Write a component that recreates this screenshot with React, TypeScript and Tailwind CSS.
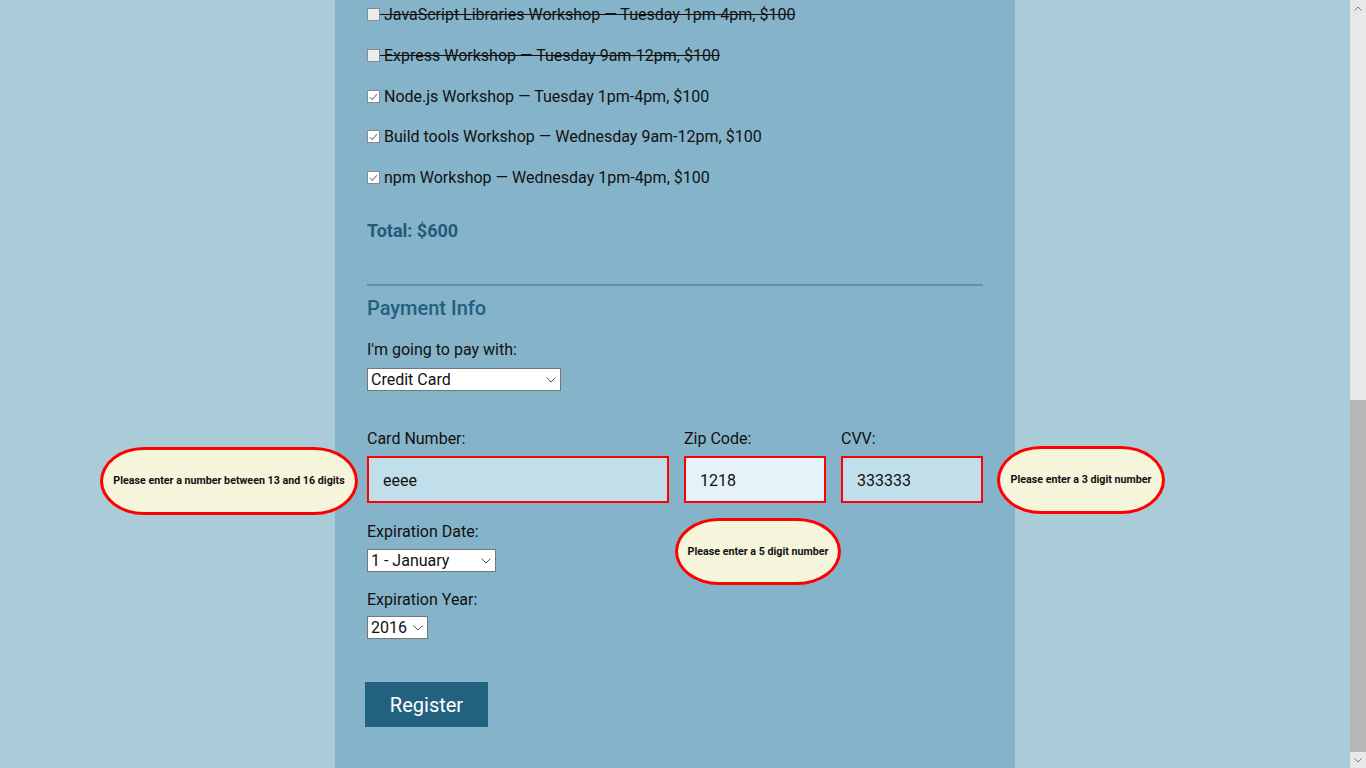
import React from 'react';

const font = { fontFamily: 'Roboto, "Liberation Sans", sans-serif' };

const workshops = [
  { text: 'JavaScript Libraries Workshop — Tuesday 1pm-4pm, $100', checked: false, disabled: true },
  { text: 'Express Workshop — Tuesday 9am-12pm, $100', checked: false, disabled: true },
  { text: 'Node.js Workshop — Tuesday 1pm-4pm, $100', checked: true, disabled: false },
  { text: 'Build tools Workshop — Wednesday 9am-12pm, $100', checked: true, disabled: false },
  { text: 'npm Workshop — Wednesday 1pm-4pm, $100', checked: true, disabled: false },
];

function Box({ checked, disabled }: { checked: boolean; disabled: boolean }) {
  return (
    <span
      className={`relative inline-block w-[13px] h-[13px] border border-[#8a8a8a] align-[-1px] ${
        disabled ? 'bg-[#ececec]' : 'bg-white'
      }`}
    >
      {checked && (
        <svg className="absolute left-[1px] top-[2px]" width="9" height="8" viewBox="0 0 9 8" fill="none">
          <path d="M1 4.2 L3.4 6.4 L8 1.2" stroke="#7b8fa8" strokeWidth="1.1" />
        </svg>
      )}
    </span>
  );
}

function Chevron() {
  return (
    <svg width="10" height="6" viewBox="0 0 10 6" fill="none">
      <path d="M0.5 0.5 L5 5 L9.5 0.5" stroke="#555" strokeWidth="1" />
    </svg>
  );
}

function FakeSelect({ value, width }: { value: string; width: string }) {
  return (
    <div
      className={`${width} h-[23px] flex items-center justify-between bg-white border border-[#767676] pl-[3px] pr-[4px] text-[16px] text-[#111] leading-none`}
    >
      <span>{value}</span>
      <Chevron />
    </div>
  );
}

function Tip({ text, className }: { text: string; className: string }) {
  return (
    <div
      className={`absolute flex items-center justify-center pt-[1px] border-[3px] border-[#ff0000] bg-[#f5f5dc] rounded-[44px/50%] text-[10.7px] font-bold text-[#111] whitespace-nowrap ${className}`}
    >
      {text}
    </div>
  );
}

export default function App() {
  return (
    <div style={font} className="w-[1366px] h-[768px] overflow-hidden flex bg-[#aacbd8]">
      <div className="flex-1 flex justify-center">
        <div className="w-[680px] h-full bg-[#85b3c9] px-8 pt-[5px] text-[16px] text-[#111]">
          {/* Activities */}
          <div className="flex flex-col gap-[20.75px]">
            {workshops.map((w) => (
              <label key={w.text} className={`block h-5 leading-5 ${w.disabled ? 'line-through' : ''}`}>
                <Box checked={w.checked} disabled={w.disabled} /> {w.text}
              </label>
            ))}
          </div>

          <p className="mt-[31px] text-[18px] leading-6 font-bold text-[#205c7b]">Total: $600</p>

          <div className="mt-[41px] h-[2px] bg-[#5f92ab]" />

          {/* Payment */}
          <h2 className="mt-[10px] text-[20px] leading-6 font-medium text-[#22607f]">Payment Info</h2>

          <p className="mt-5 leading-5">I'm going to pay with:</p>
          <div className="mt-2">
            <FakeSelect value="Credit Card" width="w-[194px]" />
          </div>

          <div className="mt-[38px] grid grid-cols-[302px_142px_142px] gap-x-[15px]">
            <p className="leading-5">Card Number:</p>
            <p className="leading-5">Zip Code:</p>
            <p className="leading-5">CVV:</p>

            <div className="relative mt-[7px]">
              <div className="h-[47px] border-2 border-[#ff0000] bg-[#c1dfea] flex items-center pl-[14px] pt-[2px]">eeee</div>
              <Tip text="Please enter a number between 13 and 16 digits" className="w-[258px] h-[68px] left-[-267px] top-[-9px]" />
            </div>
            <div className="relative mt-[7px]">
              <div className="h-[47px] border-2 border-[#ff0000] bg-[#e5f2fa] flex items-center pl-[14px] pt-[2px]">1218</div>
              <Tip text="Please enter a 5 digit number" className="w-[166px] h-[67px] left-[-9px] top-[62px]" />
            </div>
            <div className="relative mt-[7px]">
              <div className="h-[47px] border-2 border-[#ff0000] bg-[#c1dfea] flex items-center pl-[14px] pt-[2px]">333333</div>
              <Tip text="Please enter a 3 digit number" className="w-[168px] h-[68px] left-[156px] top-[-10px]" />
            </div>
          </div>

          <p className="mt-[19px] leading-5">Expiration Date:</p>
          <div className="mt-[7px]">
            <FakeSelect value="1 - January" width="w-[129px]" />
          </div>

          <p className="mt-[18px] leading-5">Expiration Year:</p>
          <div className="mt-[6px]">
            <FakeSelect value="2016" width="w-[61px]" />
          </div>

          <button className="mt-[43px] ml-[-2px] w-[123px] h-[45px] bg-[#22627e] text-white text-[20px]">
            Register
          </button>
        </div>
      </div>

      {/* scrollbar */}
      <div className="w-4 h-full flex flex-col bg-[#e8e8e8]">
        <div className="h-4 flex items-center justify-center">
          <svg width="8" height="5" viewBox="0 0 8 5" fill="none">
            <path d="M0.5 4.5 L4 1 L7.5 4.5" stroke="#777" strokeWidth="1" />
          </svg>
        </div>
        <div className="flex-1" />
        <div className="h-[352px] bg-[#b6b6b6]" />
        <div className="h-4 flex items-center justify-center">
          <svg width="8" height="5" viewBox="0 0 8 5" fill="none">
            <path d="M0.5 0.5 L4 4 L7.5 0.5" stroke="#777" strokeWidth="1" />
          </svg>
        </div>
      </div>
    </div>
  );
}
